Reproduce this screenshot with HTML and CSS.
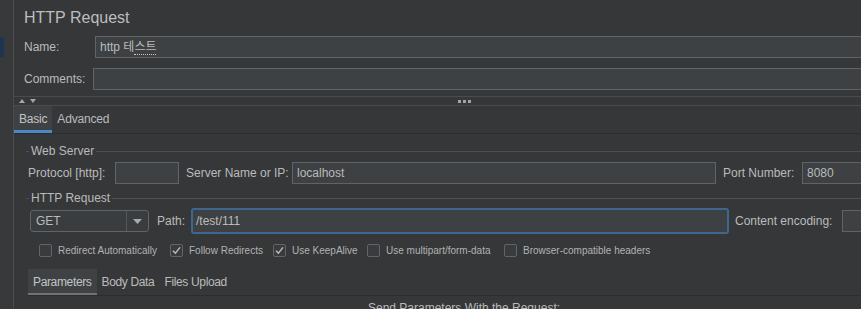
FILE: index.html
```html
<!DOCTYPE html>
<html lang="en">
<head>
<meta charset="utf-8">
<title>HTTP Request</title>
<link rel="stylesheet" href="styles.css">
</head>
<body>
<div class="app">
  <aside class="tree"><div class="tree-sel"></div></aside>
  <main class="panel">
    <h1 class="title">HTTP Request</h1>
    <div class="row name-row">
      <label class="lbl lbl-name">Name:</label>
      <div class="field grow">http 테<span class="ime">스트</span></div>
    </div>
    <div class="row comments-row">
      <label class="lbl lbl-comments">Comments:</label>
      <div class="field grow"></div>
    </div>
    <div class="splitter">
      <div class="arrows"><span class="tri-up"></span><span class="tri-down"></span></div>
      <div class="dots"><span></span><span></span><span></span></div>
    </div>
    <div class="tabs top-tabs">
      <span class="tab active focused">Basic</span>
      <span class="tab">Advanced</span>
    </div>
    <section class="basic">
      <div class="group">
        <div class="group-title"><span class="gline short"></span><span class="gtext">Web Server</span><span class="gline"></span></div>
        <div class="row server-row">
          <label class="lbl l-proto">Protocol [http]:</label>
          <div class="field f-proto"></div>
          <label class="lbl l-server">Server Name or IP:</label>
          <div class="field f-server">localhost</div>
          <label class="lbl l-port">Port Number:</label>
          <div class="field f-port">8080</div>
        </div>
      </div>
      <div class="group">
        <div class="group-title g2"><span class="gline short"></span><span class="gtext">HTTP Request</span><span class="gline"></span></div>
        <div class="row method-row">
          <div class="combo">
            <span class="combo-value">GET</span>
            <span class="combo-btn"><svg width="9" height="5" viewBox="0 0 9 5"><polygon points="0,0 9,0 4.5,5" fill="#a9a9a9"/></svg></span>
          </div>
          <label class="lbl l-path">Path:</label>
          <div class="field f-path">/test/111</div>
          <label class="lbl l-enc">Content encoding:</label>
          <div class="field f-enc"></div>
        </div>
        <div class="checks">
          <div class="check"><span class="box"></span><span class="ctext">Redirect Automatically</span></div>
          <div class="check"><span class="box"><svg width="13" height="13" viewBox="0 0 13 13"><path d="M3 6.8 L5.4 9.3 L10 3.4" fill="none" stroke="#bdbdbd" stroke-width="1.4"/></svg></span><span class="ctext">Follow Redirects</span></div>
          <div class="check"><span class="box"><svg width="13" height="13" viewBox="0 0 13 13"><path d="M3 6.8 L5.4 9.3 L10 3.4" fill="none" stroke="#bdbdbd" stroke-width="1.4"/></svg></span><span class="ctext">Use KeepAlive</span></div>
          <div class="check"><span class="box"></span><span class="ctext">Use multipart/form-data</span></div>
          <div class="check"><span class="box"></span><span class="ctext">Browser-compatible headers</span></div>
        </div>
        <div class="tabs inner-tabs">
          <span class="tab active">Parameters</span>
          <span class="tab">Body Data</span>
          <span class="tab">Files Upload</span>
        </div>
        <div class="send">Send Parameters With the Request:</div>
      </div>
    </section>
  </main>
</div>
</body>
</html>
```

FILE: styles.css
```css
html, body {
  margin: 0;
  padding: 0;
  height: 100%;
  overflow: hidden;
  background: #363739;
}
body {
  font-family: "Liberation Sans", Arial, "Noto Sans CJK KR", sans-serif;
  font-size: 12px;
  color: #bbbbbb;
}
.app {
  display: flex;
  width: 900px;
  height: 309px;
}
.tree {
  width: 13px;
  flex: none;
  background: #38393b;
  border-right: 1px solid #4a4c4e;
}
.tree-sel {
  margin-top: 37px;
  width: 4px;
  height: 20px;
  background: #1d3550;
}
.panel {
  flex: 1;
  min-width: 0;
}
.title {
  margin: 0;
  height: 36px;
  box-sizing: border-box;
  padding: 8px 0 0 10px;
  font-size: 16px;
  line-height: 20px;
  font-weight: normal;
  color: #bdbdbd;
}
.row {
  display: flex;
  align-items: center;
}
.name-row, .comments-row {
  height: 22px;
  padding-left: 10px;
}
.name-row { margin-bottom: 10px; }
.comments-row { margin-bottom: 6px; }
.lbl {
  flex: none;
  white-space: nowrap;
  color: #bbbbbb;
}
.lbl-name { width: 71px; }
.lbl-comments { width: 69px; }
.field {
  box-sizing: border-box;
  height: 22px;
  background: #3d4143;
  border: 1px solid #616365;
  line-height: 20px;
  padding: 0 4px;
  white-space: nowrap;
  color: #bbbbbb;
  flex: none;
}
.grow { flex: 1; }
.ime {
  border-bottom: 1px dotted #c8c8c8;
}
.splitter {
  box-sizing: border-box;
  height: 10px;
  border-top: 1px solid #4a4b4d;
  border-bottom: 1px solid #4a4b4d;
  display: flex;
  align-items: center;
}
.arrows {
  display: flex;
  gap: 5px;
  padding-left: 5px;
  width: 439px;
  flex: none;
}
.tri-up {
  width: 0; height: 0;
  border-left: 3.5px solid transparent;
  border-right: 3.5px solid transparent;
  border-bottom: 4px solid #a6a6a6;
}
.tri-down {
  width: 0; height: 0;
  border-left: 3.5px solid transparent;
  border-right: 3.5px solid transparent;
  border-top: 4px solid #a6a6a6;
}
.dots {
  display: flex;
  gap: 2px;
}
.dots span {
  width: 3px;
  height: 3px;
  background: #a2a2a2;
}
.tabs {
  display: flex;
  border-bottom: 1px solid #2c2d2f;
}
.tab {
  padding: 0 5px;
  line-height: 27px;
  height: 27px;
  white-space: nowrap;
  box-sizing: border-box;
}
.top-tabs .tab {
  letter-spacing: -0.2px;
}
.top-tabs .tab.active {
  background: #3e4244;
  box-shadow: inset 0 -3px 0 #4a88c7;
  color: #c4c4c4;
}
.basic {
  padding: 10px 0 0 12px;
}
.group-title {
  display: flex;
  align-items: center;
  height: 14px;
}
.g2 { margin-top: 7px; }
.gline {
  flex: 1;
  height: 1px;
  background: #4c4e50;
}
.gline.short {
  flex: none;
  width: 3px;
}
.gtext {
  padding: 0 2px;
  line-height: 14px;
  white-space: nowrap;
}
.server-row {
  margin-top: 4px;
  height: 22px;
  padding-left: 2px;
}
.l-proto { width: 87px; }
.f-proto { width: 64px; }
.l-server { width: 106px; margin-left: 7px; }
.f-server { width: 424px; }
.l-port { width: 79px; margin-left: 7px; }
.f-port { width: 80px; }
.method-row {
  margin-top: 3px;
  height: 26px;
  padding-left: 4px;
}
.combo {
  flex: none;
  box-sizing: border-box;
  width: 119px;
  height: 22px;
  border: 1px solid #616365;
  border-radius: 3px;
  background: #3a3d3f;
  display: flex;
}
.combo-value {
  flex: 1;
  padding-left: 5px;
  line-height: 20px;
}
.combo-btn {
  width: 21px;
  border-left: 1px solid #555759;
  display: flex;
  align-items: center;
  justify-content: center;
}
.l-path { width: 34px; margin-left: 8px; }
.f-path {
  width: 538px;
  height: 26px;
  border: 2px solid #3e6790;
  border-radius: 3px;
  line-height: 22px;
  padding-left: 3px;
}
.l-enc { width: 107px; margin-left: 6px; }
.f-enc { width: 60px; }
.checks {
  display: grid;
  grid-template-columns: 131px 103px 94px 137px auto;
  margin-top: 10px;
  padding-left: 13px;
  height: 13px;
}
.check {
  display: flex;
  align-items: center;
  gap: 6px;
  height: 13px;
}
.box {
  box-sizing: border-box;
  width: 13px;
  height: 13px;
  flex: none;
  border: 1px solid #626466;
  border-radius: 2px;
  background: #393c3e;
  display: flex;
  align-items: center;
  justify-content: center;
}
.box svg {
  display: block;
  margin: -1px;
}
.ctext {
  font-size: 10px;
  color: #b2b2b2;
  white-space: nowrap;
}
.inner-tabs {
  margin-top: 12px;
  margin-left: 2px;
}
.inner-tabs .tab {
  height: 26px;
  line-height: 26px;
  letter-spacing: -0.35px;
}
.inner-tabs .tab.active {
  background: #3e4244;
  box-shadow: inset 0 -2px 0 #707274;
  color: #c4c4c4;
}
.send {
  margin-top: 4px;
  margin-left: 2px;
  text-align: center;
  line-height: 16px;
}
```
